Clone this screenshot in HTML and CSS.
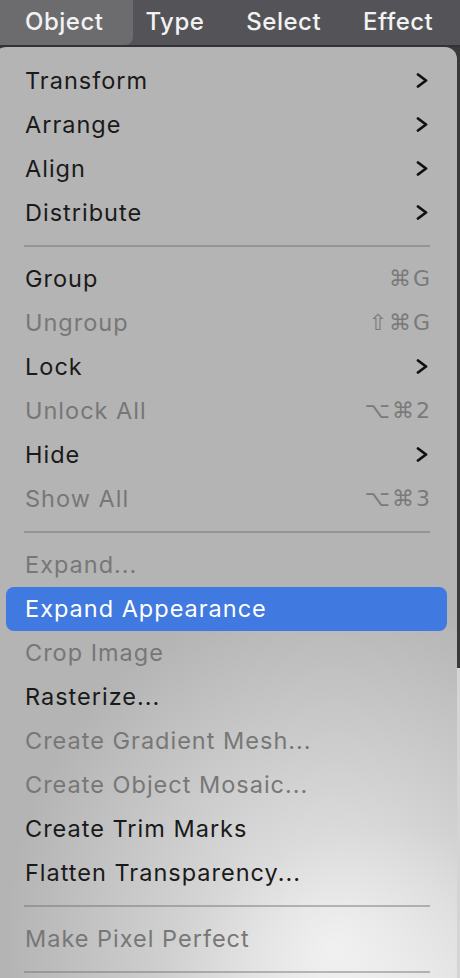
FILE: index.html
```html
<!DOCTYPE html>
<html lang="en">
<head>
    <meta charset="UTF-8">
    <meta name="viewport" content="width=device-width, initial-scale=1.0">
    <title>Object Menu</title>
    <link rel="stylesheet" href="styles.css">
</head>
<body>
    <div class="menubar">
        <span class="mb-item active">Object</span>
        <span class="mb-item">Type</span>
        <span class="mb-item">Select</span>
        <span class="mb-item">Effect</span>
    </div>

    <div class="menu">
        <div class="row"><span>Transform</span><svg class="chev" viewBox="0 0 12 15"><polyline points="2,1.5 10,7.5 2,13.5"/></svg></div>
        <div class="row"><span>Arrange</span><svg class="chev" viewBox="0 0 12 15"><polyline points="2,1.5 10,7.5 2,13.5"/></svg></div>
        <div class="row"><span>Align</span><svg class="chev" viewBox="0 0 12 15"><polyline points="2,1.5 10,7.5 2,13.5"/></svg></div>
        <div class="row"><span>Distribute</span><svg class="chev" viewBox="0 0 12 15"><polyline points="2,1.5 10,7.5 2,13.5"/></svg></div>
        <div class="sep"></div>
        <div class="row"><span>Group</span><span class="key">&#x2318;G</span></div>
        <div class="row off"><span>Ungroup</span><span class="key">&#x21E7;&#x2318;G</span></div>
        <div class="row"><span>Lock</span><svg class="chev" viewBox="0 0 12 15"><polyline points="2,1.5 10,7.5 2,13.5"/></svg></div>
        <div class="row off"><span>Unlock All</span><span class="key">&#x2325;&#x2318;2</span></div>
        <div class="row"><span>Hide</span><svg class="chev" viewBox="0 0 12 15"><polyline points="2,1.5 10,7.5 2,13.5"/></svg></div>
        <div class="row off"><span>Show All</span><span class="key">&#x2325;&#x2318;3</span></div>
        <div class="sep"></div>
        <div class="row off"><span>Expand...</span></div>
        <div class="row selected"><span>Expand Appearance</span></div>
        <div class="row off"><span>Crop Image</span></div>
        <div class="row"><span>Rasterize...</span></div>
        <div class="row off"><span>Create Gradient Mesh...</span></div>
        <div class="row off"><span>Create Object Mosaic...</span></div>
        <div class="row"><span>Create Trim Marks</span></div>
        <div class="row"><span>Flatten Transparency...</span></div>
        <div class="sep"></div>
        <div class="row off"><span>Make Pixel Perfect</span></div>
        <div class="sep"></div>
    </div>
</body>
</html>
```

FILE: styles.css
```css
html, body {
    margin: 0;
    height: 978px;
    overflow: hidden;
}
body {
    font-family: Inter, "Noto Sans", sans-serif;
    background: linear-gradient(#3a3a3c 0, #3a3a3c 668px, #d4d4d4 668px);
}

/* Barra de menu */
.menubar {
    display: flex;
    align-items: stretch;
    height: 45px;
    background-color: #545458;
    border-bottom: 2px solid #333335;
    color: #f2f2f2;
    font-size: 24px;
    font-weight: 500;
    letter-spacing: 0.5px;
}
.mb-item {
    display: flex;
    align-items: center;
    padding: 0 21px 2px 21px;
}
.mb-item.active {
    padding: 0 30px 2px 25px;
    margin-right: -9px;
    background-color: #6c6c6f;
    border-radius: 0 0 8px 0;
}

/* Panel del menu */
.menu {
    margin-left: -6px;
    width: 463px;
    box-sizing: border-box;
    padding: 12px 0 0 6px;
    border-radius: 12px 12px 0 0;
    height: 940px;
    background:
        radial-gradient(ellipse 330px 360px at 340px 900px, rgba(255,255,255,0.75), rgba(255,255,255,0) 100%),
        radial-gradient(ellipse 260px 200px at 420px 980px, rgba(255,255,255,0.5), rgba(255,255,255,0) 100%),
        #b4b4b4;
    font-size: 23.5px;
    color: #1a1a1a;
}
.row {
    display: flex;
    justify-content: space-between;
    align-items: center;
    height: 44px;
    padding: 0 17px 1px 25px;
    box-sizing: border-box;
    margin: 0 10px 0 0;
    letter-spacing: 1px;
}
.row.off {
    color: #777777;
}
.row.selected {
    background-color: #4079e0;
    color: #ffffff;
    border-radius: 8px;
    margin: 0 10px 0 6px;
    padding-left: 19px;
}
.chev {
    width: 12px;
    height: 15px;
    margin-right: 2px;
}
.chev polyline {
    fill: none;
    stroke: #111;
    stroke-width: 2.8;
    stroke-linecap: round;
    stroke-linejoin: round;
}
.key {
    font-family: "DejaVu Sans", sans-serif;
    font-size: 22px;
    letter-spacing: 2px;
    margin-right: -2px;
    color: #7a7a7a;
}
.sep {
    height: 22px;
    display: flex;
    align-items: center;
    padding: 0 24px 0 24px;
    margin-right: 3px;
}
.sep::before {
    content: "";
    flex: 1;
    height: 2px;
    background-color: rgba(110,110,110,0.45);
}
```
